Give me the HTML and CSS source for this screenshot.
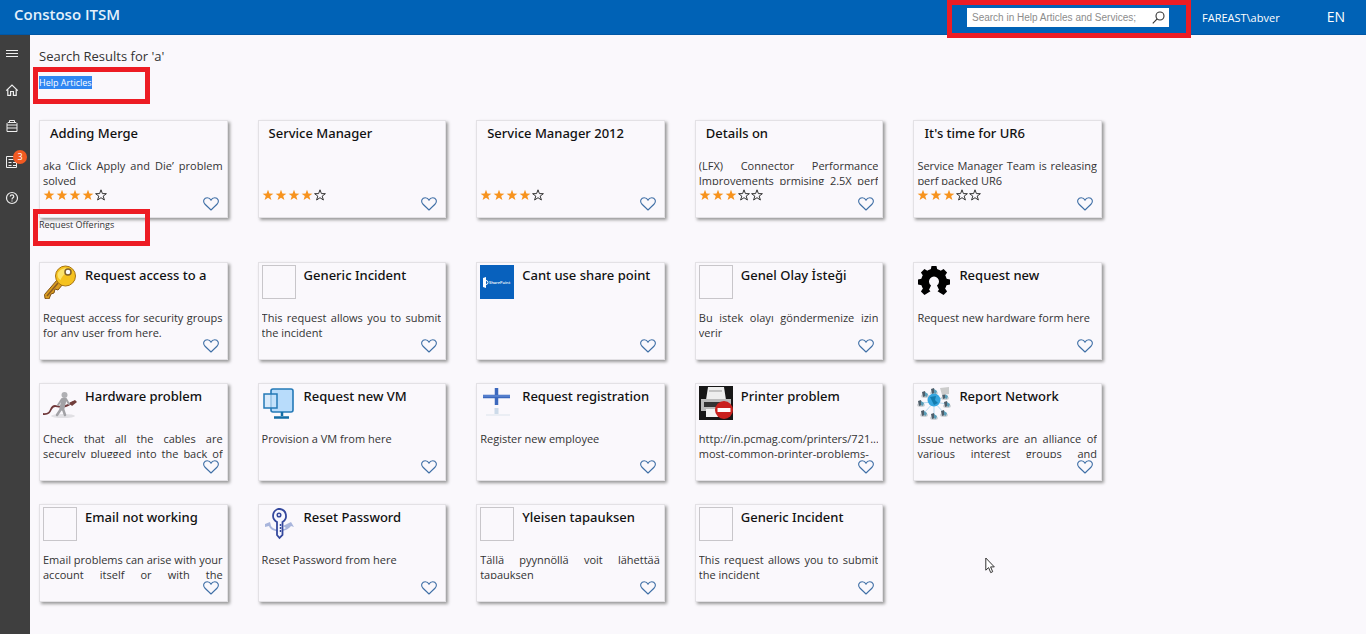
FILE: index.html
```html
<!DOCTYPE html>
<html lang="en">
<head>
<meta charset="utf-8">
<title>Constoso ITSM</title>
<link rel="stylesheet" href="styles.css">
</head>
<body>
<svg class="defs" aria-hidden="true">
  <symbol id="star" viewBox="0 0 12 12"><path d="M6 .8 7.4 4.6 11.4 4.7 8.2 7.1 9.4 11 6 8.7 2.6 11 3.8 7.1.6 4.7 4.6 4.6Z"/></symbol>
  <symbol id="heart" viewBox="0 0 16 14"><path d="M8 13 1.8 7C-.6 4 1.2.8 4.2.8 6 .8 7.4 1.8 8 3.2 8.6 1.8 10 .8 11.8.8c3 0 4.8 3.2 2.4 6.2Z" fill="none" stroke="#3f6fa6" stroke-width="1.1" stroke-linejoin="round"/></symbol>
</svg>
<header class="topbar">
  <a class="brand" href="#">Constoso ITSM</a>
  <form class="search callout callout-search" role="search">
    <input class="search-input" type="text" aria-label="Search" placeholder="Search in Help Articles and Services;">
    <button class="search-button" type="button" aria-label="Search"><svg width="13" height="13" viewBox="0 0 13 13" fill="none" stroke="#333" stroke-width="1.1"><circle cx="8" cy="5" r="4"/><path d="M5.2 7.8.8 12.4"/></svg></button>
  </form>
  <span class="user">FAREAST\abver</span>
  <button class="lang" type="button">EN</button>
</header>
<div class="layout">
  <nav class="sidebar" aria-label="Main">
    <button class="nav-item" type="button" aria-label="Menu"><svg width="14" height="14" viewBox="0 0 14 14" stroke="#eee"><path d="M1 3.5h12M1 6.5h12M1 9.5h12"/></svg></button>
    <a class="nav-item" href="#" aria-label="Home"><svg width="14" height="14" viewBox="0 0 14 14" fill="none" stroke="#eee" stroke-width="1.2"><path d="M1.2 7.6 7 2l5.8 5.6M2.8 6.3v6H5.6V8.5h2.8v3.8h2.8v-6"/></svg></a>
    <a class="nav-item" href="#" aria-label="Services"><svg width="14" height="14" viewBox="0 0 14 14" fill="none" stroke="#eee"><path d="M4.5 3.5v-2h5v2M2 12.5v-8l1-1h8l1 1v8ZM2 6h10M2 9h10"/></svg></a>
    <a class="nav-item" href="#" aria-label="My requests, 3 new"><svg width="14" height="14" viewBox="0 0 14 14" fill="none" stroke="#eee"><path d="M1.5 1.5h10v11h-10ZM3.5 4.5h5M3.5 7.5h3M8 7.5h3M3.5 10.5h3M8 10.5h3"/></svg><span class="badge">3</span></a>
    <a class="nav-item" href="#" aria-label="Help"><svg width="14" height="14" viewBox="0 0 14 14" fill="none" stroke="#eee" stroke-width="1.2"><circle cx="7" cy="7" r="5.5"/><path d="M5.2 5.6c.1-2.4 3.6-2.2 3.6-.2C8.8 6.8 7 6.8 7 8.4M7 9.4v1.2"/></svg></a>
  </nav>
  <main class="content">
    <h1 class="page-title">Search Results for 'a'</h1>
    <section>
      <h2 class="section-title callout"><mark class="selected">Help Articles</mark></h2>
      <div class="cards" id="articles"></div>
    </section>
    <section>
      <h2 class="section-title callout">Request Offerings</h2>
      <div class="cards" id="offerings"></div>
    </section>
  </main>
</div>
<svg class="cursor" width="10" height="17" viewBox="0 0 10 17" aria-hidden="true"><path d="M.8 1v12.2l2.8-2.6 2.1 5 2-.9-2.1-4.8h3.7Z" fill="#fff" stroke="#333"/></svg>
<script src="app.js"></script>
</body>
</html>
```
FILE: styles.css
```css
*, *::before, *::after { box-sizing: border-box; }
body {
  margin: 0;
  min-height: 100vh;
  display: flex;
  flex-direction: column;
  background: #faf8fc;
  color: #333;
  font: 11px/15px "Open Sans", "Noto Sans", sans-serif;
}
button { padding: 0; border: 0; background: none; color: inherit; font: inherit; }
a { color: inherit; text-decoration: none; }
h1, h2, h3, p { margin: 0; font-weight: 400; }
svg { display: block; flex: none; }
.defs { position: absolute; width: 0; height: 0; }

.topbar {
  display: flex;
  align-items: center;
  height: 35px;
  padding: 0 20px 0 14px;
  background: #0062b6;
  border-bottom: 1px solid #0057a6;
  color: #fff;
}
.brand { margin: 0 auto 6px 0; font-size: 15px; line-height: 20px; font-weight: 600; color: #e4f0fb; }
.search { display: flex; align-items: center; width: 202px; height: 19px; background: #fff; }
.search-input {
  flex: 1;
  min-width: 0;
  padding: 1px 0 0 5px;
  border: 0;
  outline: 0;
  background: none;
  font: 10px/18px "Liberation Sans", Arial, sans-serif;
}
.search-input::placeholder { color: #8c8c8c; opacity: 1; }
.search-button { width: 17px; }
.user { width: 124px; margin-left: 33px; }
.lang { width: 20px; padding-bottom: 2px; font-size: 14px; }

.callout { position: relative; }
.callout::after {
  content: "";
  position: absolute;
  top: -9px;
  left: -6px;
  width: 117px;
  height: 37px;
  border: 5px solid #ed1c24;
  pointer-events: none;
}
.callout-search::after { top: -8px; left: -20px; width: 244px; height: 38px; }

.layout { display: flex; flex: 1; }
.sidebar { width: 30px; padding-top: 1px; background: #3f3f3f; }
.nav-item {
  position: relative;
  display: flex;
  align-items: center;
  width: 100%;
  height: 36px;
  padding-left: 5px;
}
.badge {
  position: absolute;
  top: 6px;
  left: 13px;
  width: 14px;
  height: 14px;
  border-radius: 50%;
  background: #f15a22;
  color: #fff;
  font-size: 9px;
  line-height: 14px;
  text-align: center;
}

.content { flex: 1; padding: 10px 20px 20px 9px; }
.page-title { font-size: 13px; line-height: 22px; padding-bottom: 9px; }
.section-title { height: 44px; font-size: 9px; line-height: 13px; }
.selected { background: #2f86f2; color: #fff; }

.cards {
  display: grid;
  grid-template-columns: repeat(auto-fill, minmax(180px, 1fr));
  gap: 23px 30px;
  max-width: 1063px;
}
.card {
  display: flex;
  flex-direction: column;
  position: relative;
  height: 98px;
  padding: 2px 4px 0 3px;
  border: 1px solid #e3e1e5;
  box-shadow: 2px 2px 3px #999;
  background: #faf8fc;
}
.card-head { display: flex; gap: 8px; height: 45px; }
.article .card-head { height: 35px; padding-left: 7px; }
.card-title { font: 500 13px/20px "Noto Sans", sans-serif; color: #111; white-space: nowrap; }
.thumb { width: 34px; height: 34px; }
.thumb-empty { border: 1px solid #c8c6ca; }
.text { height: 27px; overflow: hidden; text-align: justify; }
.text-filled { text-align-last: justify; white-space: nowrap; }
.text-plain { text-align: left; white-space: nowrap; }
.rating { display: flex; gap: 1px; padding-top: 4px; }
.star { width: 12px; height: 12px; fill: #f7931e; }
.star-empty { fill: none; stroke: #333; stroke-width: 1; }
.favorite { position: absolute; right: 8px; bottom: 6px; }
.cursor { position: absolute; left: 985px; top: 557px; }
```
FILE: app.js
```js
const svg = (body) => `<svg class="thumb" viewBox="0 0 34 34" aria-hidden="true">${body}</svg>`;

const teeth = [0, 45, 90, 135, 225, 270, 315]
  .map((a) => `<path d="M13 8 14.5 1h5L21 8Z" transform="rotate(${a} 17 17)"/>`).join("");

const nodes = [[17, 5], [28, 10], [30, 18], [27, 27], [17, 30], [7, 27], [4, 17], [8, 8]]
  .map(([x, y]) => `<path d="M17 16 ${x} ${y}" stroke="#b5d9ef"/><ellipse cx="${x}" cy="${y + 2}" rx="4" ry="2" fill="#d0d2d6"/><path d="M${x - 3} ${y - 2}l3-1 1 5-3 1Z" fill="#4f5f6b"/><path d="M${x} ${y - 2}l3 2-1 3-2-1Z" fill="#5a9db8"/>`).join("");

const icons = {
  empty: '<span class="thumb thumb-empty"></span>',
  key: svg('<path d="M14 15 1.5 29.5 2 33.5l4 .5 2-5 3-1 1-4 3 1 5-6Z" fill="#d99c20" stroke="#805316"/><path d="m15 18-11 13" stroke="#8a5b22" stroke-width="1.5"/><circle cx="22.5" cy="11" r="10" fill="#f5c21f" stroke="#a8740f"/><path d="M14.5 9c2-6 10-8 14-3-4 0-9 4-11 9-2-1-3-3-3-6Z" fill="#fce36b"/><circle cx="25" cy="7" r="3" fill="#fff" stroke="#80612b" stroke-width="1.5"/>'),
  sharepoint: svg('<path d="M0 0h34v34H0z" fill="#0861bd"/><path d="m3 13 3-1v11l-3-1Z" fill="#fff"/><circle cx="6" cy="17.5" r="2" fill="none" stroke="#fff"/><text x="9" y="19" font-size="4" font-weight="600" fill="#fff">SharePoint</text>'),
  gear: svg(`${teeth}<path d="M14 20.6a5 5 0 1 1 6 0L23.5 28a13 13 0 1 0-13 0Z"/>`),
  cable: svg('<ellipse cx="20" cy="30" rx="12" ry="2" fill="#e1e0e4"/><path d="M0 28c10 1 6-8 12-8 6 1 10 2 18-4" fill="none" stroke="#70383a" stroke-width="1.8"/><path d="m26 17 6-3 2 2-5 4Z" fill="#713e3b"/><g stroke="#a2a2a6" stroke-linecap="round"><path d="m18 23-4 6M20 23l2 6" stroke-width="2.5"/><path d="m21 14-2 8" stroke-width="5"/><path d="m19 13-4 6M23 13l3 5" stroke-width="2"/></g><circle cx="21.5" cy="9" r="3" fill="#b0b0b4"/>'),
  vm: svg('<rect x="9" y="3" width="22" height="23" rx="2" fill="#b8dcfb" stroke="#2479b7" stroke-width="1.6"/><rect x="2" y="8" width="13" height="14" fill="#c9e4fb" fill-opacity=".7" stroke="#2479b7" stroke-width="1.5"/><path d="M20 26v4M12 31.5h15" stroke="#126ca5" stroke-width="2.5"/>'),
  plus: svg('<path d="M16.5 2v17M3 10.5h27" stroke="#3c68bd" stroke-width="3.5"/><path d="M3 10h27" stroke="#6d94dc"/><path d="M16.500 22v6" stroke="#ccdae9" stroke-width="4"/><path d="M6 29h24" stroke="#ebeef4" stroke-width="2"/>'),
  printer: svg('<path d="M0 0h34v34H0z" fill="#171717"/><path d="M9 1h16l2 13H7Z" fill="#eee"/><path d="M2 13h30v12H2Z" fill="#bbb"/><path d="M5 16h24v5H5Z" fill="#333"/><path d="M7 23h20v8H7Z" fill="#f3f3f3"/><path d="M10 5h13" stroke="#999"/><circle cx="25" cy="24" r="9" fill="#c9211e"/><path d="M18.5 22h13v4h-13Z" fill="#fff"/>'),
  network: svg(`${nodes}<path d="m23 2 9-1v7l-7 1Z" fill="#ccc"/><circle cx="17" cy="14" r="6.5" fill="#36a6df"/><path d="m13 11 6-1-1 4 3 3-4 2Z" fill="#137cae"/>`),
  reset: svg('<path d="m3 17 5-2 1 4c2 4 11 5 15 2l-3-2 8-4 3 5-3-1c-5 7-20 7-22 0l-4 1Z" fill="#a8b5dc"/><path d="M16 2a7 7 0 0 0-2.500 12l1.500 1v13l2.500 3 3-3V15A7 7 0 0 0 18 2Z" fill="#f7f8ff" stroke="#34489d" stroke-width="1.8"/><path d="M18.500 17v9" stroke="#34489d" stroke-width="1.5" stroke-dasharray="2 1"/><circle cx="17" cy="8" r="1.800" fill="none" stroke="#34489d" stroke-width="1.5"/>'),
};

const articles = [
  { title: "Adding Merge", text: "aka ‘Click Apply and Die’ problem solved", stars: 4 },
  { title: "Service Manager", text: "", stars: 4 },
  { title: "Service Manager 2012", text: "", stars: 4 },
  { title: "Details on", text: "(LFX) Connector Performance<br>Improvements prmising 2.5X perf", stars: 3, fit: "text-filled" },
  { title: "It's time for UR6", text: "Service Manager Team is releasing perf packed UR6", stars: 3 },
];

const offerings = [
  { icon: "key", title: "Request access to a", text: "Request access for security groups for any user from here." },
  { icon: "empty", title: "Generic Incident", text: "This request allows you to submit the incident" },
  { icon: "sharepoint", title: "Cant use share point", text: "" },
  { icon: "empty", title: "Genel Olay İsteği", text: "Bu istek olayı göndermenize izin verir" },
  { icon: "gear", title: "Request new", text: "Request new hardware form here" },
  { icon: "cable", title: "Hardware problem", text: "Check that all the cables are<br>securely plugged into the back of", fit: "text-filled" },
  { icon: "vm", title: "Request new VM", text: "Provision a VM from here" },
  { icon: "plus", title: "Request registration", text: "Register new employee" },
  { icon: "printer", title: "Printer problem", text: "http://in.pcmag.com/printers/721...<br>most-common-printer-problems-", fit: "text-plain" },
  { icon: "network", title: "Report Network", text: "Issue networks are an alliance of<br>various interest groups and", fit: "text-filled" },
  { icon: "empty", title: "Email not working", text: "Email problems can arise with your<br>account itself or with the", fit: "text-filled" },
  { icon: "reset", title: "Reset Password", text: "Reset Password from here" },
  { icon: "empty", title: "Yleisen tapauksen", text: "Tällä pyynnöllä voit lähettää tapauksen" },
  { icon: "empty", title: "Generic Incident", text: "This request allows you to submit the incident" },
];

const rating = (n) => `<div class="rating" role="img" aria-label="${n} of 5 stars">${[1, 2, 3, 4, 5]
  .map((i) => `<svg class="star${i > n ? " star-empty" : ""}"><use href="#star"/></svg>`).join("")}</div>`;

const card = (c) => `<article class="card${c.stars ? " article" : ""}">
  <div class="card-head">${c.icon ? icons[c.icon] : ""}<h3 class="card-title">${c.title}</h3></div>
  <p class="text ${c.fit || ""}">${c.text}</p>${c.stars ? rating(c.stars) : ""}
  <button class="favorite" type="button" aria-label="Favorite"><svg width="16" height="14"><use href="#heart"/></svg></button>
</article>`;

document.getElementById("articles").innerHTML = articles.map(card).join("");
document.getElementById("offerings").innerHTML = offerings.map(card).join("");
```
